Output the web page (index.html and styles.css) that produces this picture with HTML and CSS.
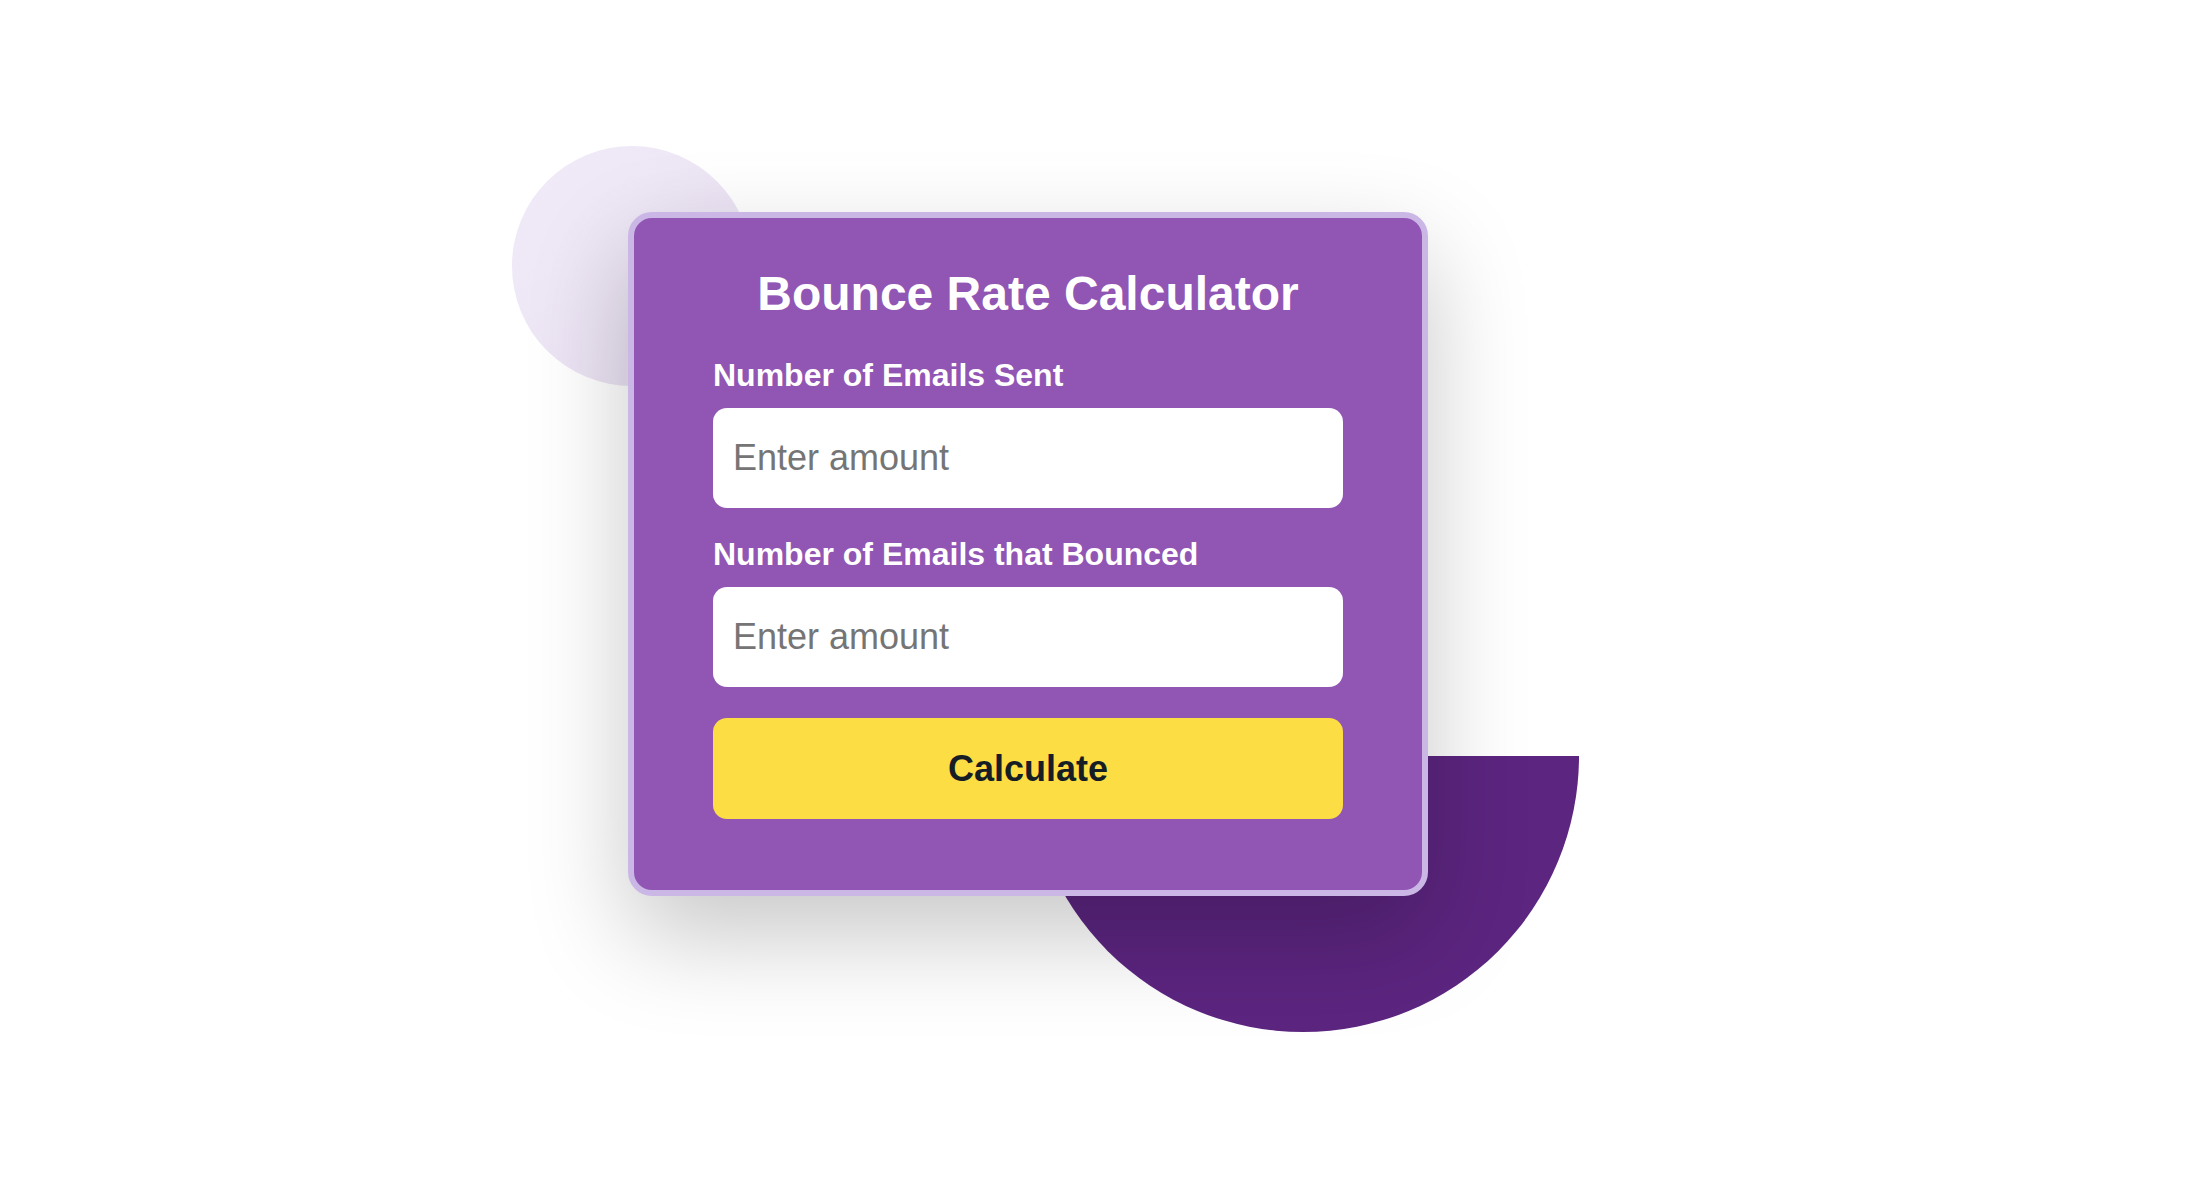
FILE: index.html
```html
<!DOCTYPE html>
<html lang="en">
  <head>
    <meta charset="UTF-8" />
    <meta name="viewport" content="width=device-width, initial-scale=1.0" />
    <title>Bounce Rate Calculator</title>
    <link rel="stylesheet" href="styles.css">
  </head>

  <body>
    <main class="scene">
      <div class="stage">
        <span class="blob blob-light"></span>
        <span class="blob blob-dark"></span>

        <div class="card">
          <h1>Bounce Rate Calculator</h1>

          <form id="bounceForm">
            <div class="field">
              <label for="emailsSent">Number of Emails Sent</label>
              <input type="number" id="emailsSent" placeholder="Enter amount" />
            </div>

            <div class="field">
              <label for="emailsBounced">Number of Emails that Bounced</label>
              <input type="number" id="emailsBounced" placeholder="Enter amount" />
            </div>

            <button type="submit" class="btn">Calculate</button>
          </form>
        </div>
      </div>
    </main>
  </body>
</html>
```

FILE: styles.css
```css
:root {
  --card-color: #9155b4;
  --card-border: #cab7e6;
  --accent-color: #fcde44;
  --text-dark: #161d24;
  --placeholder: #757575;
  --radius: 14px;
}

* {
  box-sizing: border-box;
  margin: 0;
  padding: 0;
  font-family: "Liberation Sans", Arial, Helvetica, sans-serif;
}

body {
  background: #ffffff;
  width: 2186px;
  height: 1188px;
  overflow: hidden;
}

.scene {
  padding: 212px 0 0 628px;
}

.stage {
  position: relative;
  width: 800px;
}

/* Decorative shapes behind the card */
.blob {
  position: absolute;
  display: block;
}

.blob-light {
  left: -116px;
  top: -66px;
  width: 240px;
  height: 240px;
  border-radius: 50%;
  background: linear-gradient(135deg, #f1ebf8, #e9e0f2);
}

.blob-dark {
  left: 399px;
  top: 544px;
  width: 552px;
  height: 276px;
  border-radius: 0 0 276px 276px;
  background: #5c2580;
}

.card {
  position: relative;
  z-index: 1;
  width: 800px;
  background: var(--card-color);
  border: 6px solid var(--card-border);
  border-radius: 24px;
  padding: 48px 79px 71px;
  box-shadow: 0 40px 100px rgba(0, 0, 0, 0.22);
}

h1 {
  color: #ffffff;
  font-size: 48px;
  font-weight: 700;
  text-align: center;
  margin-bottom: 36px;
}

.field {
  margin-bottom: 28px;
}

.field:last-of-type {
  margin-bottom: 31px;
}

label {
  display: block;
  color: #ffffff;
  font-size: 32px;
  font-weight: 700;
  margin-bottom: 14px;
}

input {
  display: block;
  width: 100%;
  height: 100px;
  padding: 0 20px;
  border: none;
  border-radius: var(--radius);
  background: #ffffff;
  font-size: 36px;
  color: #333;
  outline: none;
}

input::placeholder {
  color: var(--placeholder);
}

.btn {
  display: block;
  width: 100%;
  height: 101px;
  border: none;
  border-radius: var(--radius);
  background: var(--accent-color);
  color: var(--text-dark);
  font-size: 36px;
  font-weight: 700;
  cursor: pointer;
}
```
